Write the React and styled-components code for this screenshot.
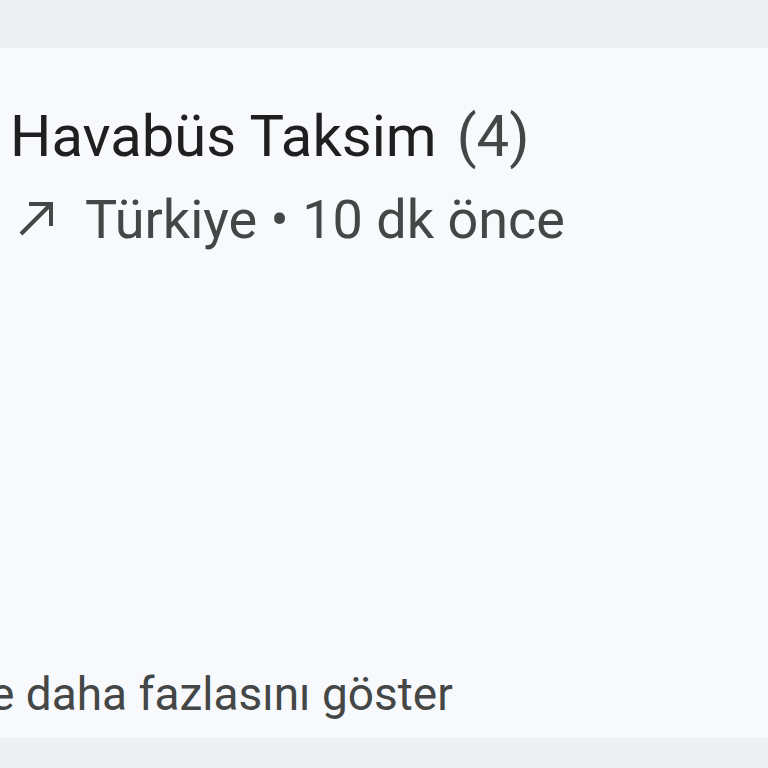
import React from "react"
import styled, { createGlobalStyle } from "styled-components"

const GlobalStyle = createGlobalStyle`
  html, body {
    margin: 0;
    padding: 0;
    background: #eeeff3;
    font-family: Roboto, "Noto Sans", sans-serif;
  }
`

const Page = styled.div`
  width: 768px;
  height: 768px;
  padding-top: 48px;
  box-sizing: border-box;
`

const Panel = styled.section`
  height: 690px;
  box-sizing: border-box;
  background: #f7f9fd;
  padding: 48px 0 14px 10px;
  display: flex;
  flex-direction: column;
  overflow: hidden;
`

const Title = styled.h2`
  margin: 0;
  font-size: 58px;
  line-height: 80px;
  font-weight: 400;
  color: #1f1f1f;
  white-space: nowrap;
`

const Count = styled.span`
  margin-left: 20px;
  color: #444746;
`

const Meta = styled.div`
  margin-top: 8px;
  display: flex;
  align-items: center;
  gap: 31px;
  font-size: 54px;
  line-height: 72px;
  color: #444746;
  white-space: nowrap;
`

const Arrow = styled.svg`
  width: 36px;
  height: 36px;
  margin-left: 8px;
  margin-top: -2px;
  flex-shrink: 0;
`

const More = styled.div`
  margin-top: auto;
  margin-left: -20px;
  font-size: 46px;
  line-height: 60px;
  color: #444746;
  white-space: nowrap;
`

const App = () => (
  <Page>
    <GlobalStyle />
    <Panel>
      <Title>
        Havabüs Taksim<Count>(4)</Count>
      </Title>
      <Meta>
        <Arrow viewBox="0 0 36 36" fill="none" stroke="#444746" strokeWidth="4">
          <path d="M3 33 L33 3" />
          <path d="M11 3 H33 V25" />
        </Arrow>
        <span>Türkiye • 10 dk önce</span>
      </Meta>
      <More>e daha fazlasını göster</More>
    </Panel>
  </Page>
)

export default App
